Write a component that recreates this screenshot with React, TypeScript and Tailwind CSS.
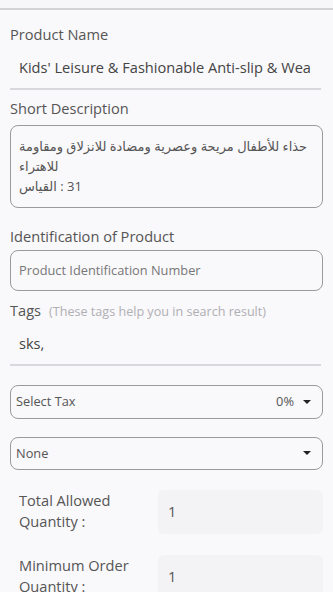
import React from 'react';

const font = { fontFamily: '"Open Sans", "DejaVu Sans", sans-serif' };

const Caret = () => (
  <svg width="10" height="6" viewBox="0 0 10 6" className="shrink-0">
    <path d="M1 1 L5 5 L9 1 Z" fill="#222" />
  </svg>
);

export default function App() {
  return (
    <div className="w-[333px] h-[592px] overflow-hidden bg-[#f9f8fb] text-[#444]" style={font}>
      {/* top bar edge */}
      <div className="h-[10px] bg-[#f7f6f9] border-b-2 border-[#d4d3d6]" />

      <div className="px-[10px]">
        {/* Product Name */}
        <div className="mt-[14px] text-[14.6px] leading-[20px] text-[#555]">Product Name</div>
        <div className="mt-[13px] px-[9px] text-[14.6px] leading-[20px] text-[#444] whitespace-nowrap">
          Kids' Leisure &amp; Fashionable Anti-slip &amp; Wea
        </div>
        <div className="mt-[11px] h-[2px] bg-[#d9d8dc] mr-[2px]" />

        {/* Short Description */}
        <div className="mt-[8px] text-[14.6px] leading-[20px] text-[#555]">Short Description</div>
        <div className="mt-[7px] h-[83px] rounded-[8px] border border-[#9a999c] px-[8px] pt-[10px] text-[13px] leading-[20px] text-[#555]">
          <div dir="ltr" className="text-left">
            حذاء للأطفال مريحة وعصرية ومضادة للانزلاق ومقاومة للاهتراء
          </div>
          <div dir="ltr" className="text-left">
            <bdi>القياس</bdi> : 31
          </div>
        </div>

        {/* Identification */}
        <div className="mt-[18px] text-[14.6px] leading-[20px] text-[#555]">Identification of Product</div>
        <div className="mt-[4px] h-[41px] rounded-[8px] border border-[#9a999c] px-[8px] flex items-center text-[12.8px] text-[#777]">
          Product Identification Number
        </div>

        {/* Tags */}
        <div className="mt-[9px] flex items-baseline gap-[8px]">
          <span className="text-[14.6px] leading-[20px] text-[#555]">Tags</span>
          <span className="text-[12.6px] text-[#b0afb3]">(These tags help you in search result)</span>
        </div>
        <div className="mt-[11px] px-[9px] text-[14.6px] leading-[20px] text-[#444]">sks,</div>
        <div className="mt-[11px] h-[2px] bg-[#d9d8dc] mr-[2px]" />

        {/* Select Tax */}
        <div className="mt-[19px] h-[34px] rounded-[8px] border border-[#9a999c] pl-[5px] pr-[10px] flex items-center text-[12.8px] text-[#555]">
          <span className="flex-1">Select Tax</span>
          <span className="mr-[8px]">0%</span>
          <Caret />
        </div>

        <div className="mt-[18px] h-[33px] rounded-[8px] border border-[#9a999c] pl-[5px] pr-[10px] flex items-center text-[12.8px] text-[#555]">
          <span className="flex-1">None</span>
          <Caret />
        </div>

        {/* quantities */}
        <div className="mt-[20px] flex items-start">
          <div className="w-[148px] pl-[9px] text-[14.6px] leading-[21px] text-[#555]">
            Total Allowed
            <br />
            Quantity :
          </div>
          <div className="flex-1 h-[44px] rounded-[6px] bg-[#f3f2f5] px-[10px] flex items-center text-[14.6px] text-[#555]">1</div>
        </div>

        <div className="mt-[21px] flex items-start">
          <div className="w-[148px] pl-[9px] text-[14.6px] leading-[21px] text-[#555]">
            Minimum Order
            <br />
            Quantity :
          </div>
          <div className="flex-1 h-[44px] rounded-[6px] bg-[#f3f2f5] px-[10px] flex items-center text-[14.6px] text-[#555]">1</div>
        </div>
      </div>
    </div>
  );
}
